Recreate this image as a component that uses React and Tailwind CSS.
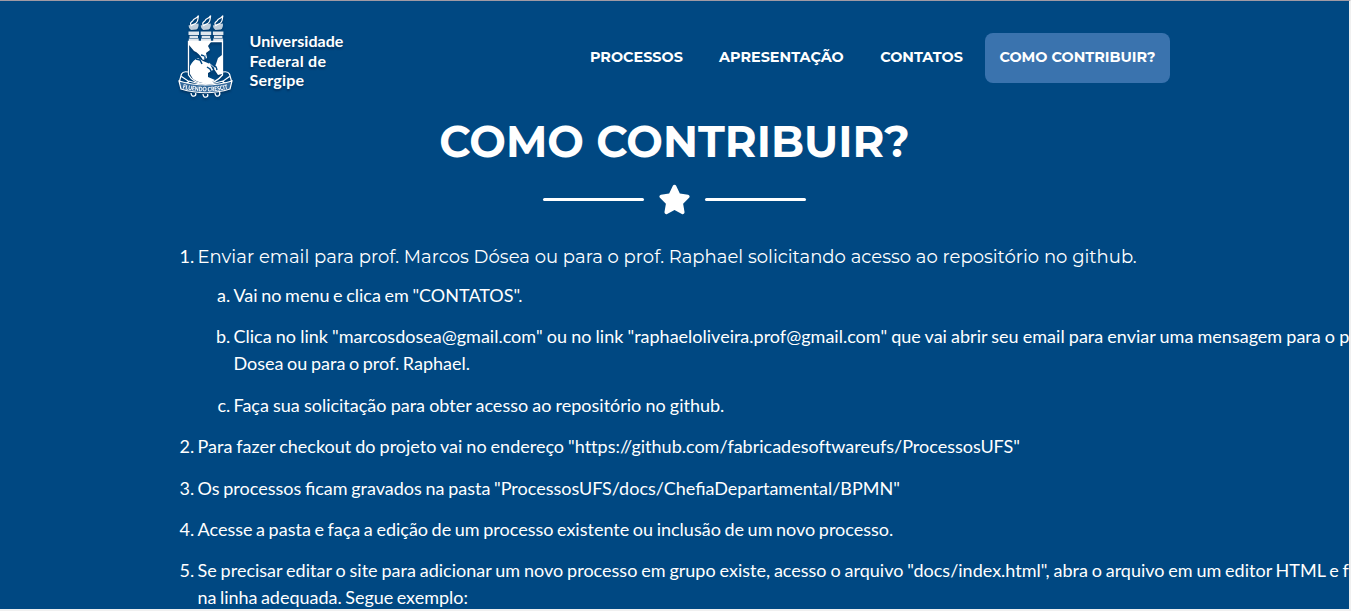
import { FaStar } from "react-icons/fa6";

function Torch({ x }) {
  return (
    <g transform={`translate(${x} 0.6)`}>
      <path d="M2.5 10C-.5 7 4 6 4.5 4C5.5 3 7.5 3 9.5 0C8.5 4 9.5 5 7.5 7C6.5 9 4 8 2.5 10Z" fill="none" stroke="white" strokeWidth="1.2" />
      <path d="M-.5 10Q4 8.5 9.5 8Q10 12 7.5 14L2 14.5Q-.5 13 -.5 10Z" fill="white" opacity=".75" />
      <path d="M-.5 16H10V19.5H-.5Z M.5 20.2H9V22.5H.5Z M-.2 23H9.7V25.5H-.2Z" fill="white" opacity=".88" />
    </g>
  );
}

function Crest() {
  return (
    <svg width="56" height="86" viewBox="0 0 56 86" className="shrink-0 drop-shadow-[0_2px_1px_rgba(0,20,50,0.35)]">
      <Torch x={11} />
      <Torch x={23.2} />
      <Torch x={35.4} />
      <path d="M10.5 26.5H44.5V60Q38 68 27.5 69Q15 68 10.5 60Z" fill="none" stroke="white" strokeWidth="1.3" />
      <path d="M11 27H33L30 31L32 35L28 38L29 43L25 45Q21 38 16 36L11 30Z" fill="white" />
      <path d="M12 51Q15 45 20 43L25 46L32 49L35 55L30 58L30 62L37 65L31 69Q20 68 15 64L12 59Z" fill="white" />
      <path d="M44 40L40 43L38 49L36 54L40 60L44 59Z" fill="white" />
      <path d="M18 44L22 45L24 49M23 40L27 41L27 44M29 52L32 54L34 58M35 50L38 52L39 55" fill="none" stroke="#004882" strokeWidth="1.5" />
      <path d="M23.5 37.5L28.5 42M31 48L38 54" stroke="white" strokeWidth=".8" />
      <path d="M10 57Q5 56 3.5 59L1.5 66Q8 70 11 66.5L3.5 61.5M45 57Q50 56 51.5 59L53.5 66Q48 70 44.5 66.5L51.5 61.5M11 66Q27 72 45 66" fill="none" stroke="white" strokeWidth="1.2" />
      <path d="M1 66L3 74Q28 81.5 52 74L54 66Q28 74 1 66Z" fill="#34699b" stroke="white" strokeWidth="1.2" />
      <path id="crest-motto" d="M4.5 73.6Q28 79.2 51 73.6" fill="none" />
      <text fontFamily="Lato, sans-serif" fontSize="6.2" fontWeight="900" fill="white">
        <textPath href="#crest-motto" textLength="46" lengthAdjust="spacingAndGlyphs">FLUENDO CRESCIT</textPath>
      </text>
      <path d="M13 78Q13.5 82 16.5 81Q18.5 80 17.5 78M25 79Q25.5 83 28.5 82Q30.5 81 29.5 79M37 78Q37.5 82 40.5 81Q42.5 80 41.5 77" fill="none" stroke="white" strokeWidth="1.3" />
    </svg>
  );
}

const links = [
  { label: "PROCESSOS", style: "w-[122px]" },
  { label: "APRESENTAÇÃO", style: "w-[153.5px]" },
  { label: "CONTATOS", style: "w-[112.5px]" },
  { label: "COMO CONTRIBUIR?", style: "w-[185px] bg-[#3a73ae] rounded-lg" },
];

function Item({ marker, sub, children }) {
  return (
    <li className={sub ? "mb-[14.4px] ml-9 flex" : "mb-[14.4px] flex"}>
      <span className="-ml-9 w-9 shrink-0 pr-[3.2px] text-right">{marker}</span>
      <div className="whitespace-nowrap">{children}</div>
    </li>
  );
}

export default function App() {
  return (
    <div className="h-[611px] w-[1351px] overflow-hidden border-r-2 border-b-2 border-t border-t-[#a09aa4] border-r-[#f0f0f0] border-b-[#f0f0f0] bg-[#004882] text-white">
      <header className="flex h-[112px] pl-[178px]">
        <div className="flex pt-[14px]">
          <Crest />
          <p className="ml-[15.5px] mt-[16px] font-['Lato'] text-[16px] leading-[19.5px] font-bold tracking-[0.05px] [text-shadow:0_2px_2px_rgba(0,20,50,0.45)]">
            Universidade<br /><span className="tracking-[0.28px]">Federal de</span><br /><span className="tracking-[0.2px]">Sergipe</span>
          </p>
        </div>
        <nav className="ml-auto mr-[179px] mt-[32px] flex h-[50px] gap-[7.2px]">
          {links.map((l) => (
            <a key={l.label} className={`flex items-center justify-center whitespace-nowrap font-[Montserrat,Inter,sans-serif] text-[14.4px] font-bold ${l.style}`}>
              {l.label}
            </a>
          ))}
        </nav>
      </header>
      <main>
        <h1 className="h-[58px] text-center font-[Montserrat,Inter,sans-serif] text-[43.4px] leading-[58px] font-bold">COMO CONTRIBUIR?</h1>
        <div className="mt-[10px] flex h-[36px] items-center justify-center gap-[14px]">
          <span className="h-[3px] w-[101px] rounded-full bg-white" />
          <FaStar className="h-[33px] w-[33px]" />
          <span className="h-[3px] w-[101px] rounded-full bg-white" />
        </div>
        <ol className="mt-[26px] ml-[197.5px] font-['Lato'] text-[18px] leading-[27px]">
          <li className="mb-[12px] flex">
            <span className="-ml-9 w-9 shrink-0 pr-[3.2px] text-right">1.</span>
            <span className="mt-px -mb-px font-[Montserrat,Inter,sans-serif] tracking-[0.028px] whitespace-nowrap">Enviar email para prof. Marcos Dósea ou para o prof. Raphael solicitando acesso ao repositório no github.</span>
          </li>
          <Item sub marker="a."><span className="[word-spacing:-1px]">Vai no menu e clica em "CONTATOS".</span></Item>
          <Item sub marker="b.">
            <span className="[word-spacing:-0.45px]">Clica no link "marcosdosea@gmail.com" ou no link "raphaeloliveira.prof@gmail.com" que vai abrir seu email para enviar uma mensagem para o prof.</span><br />
            <span className="[word-spacing:-1px]">Dosea ou para o prof. Raphael.</span>
          </Item>
          <Item sub marker="c."><span className="[word-spacing:-0.5px]">Faça sua solicitação para obter acesso ao repositório no github.</span></Item>
          <Item marker="2."><span className="[font-variant-ligatures:none] [word-spacing:-0.6px]">Para fazer checkout do projeto vai no endereço "https://github.com/fabricadesoftwareufs/ProcessosUFS"</span></Item>
          <Item marker="3."><span className="[word-spacing:-0.95px]">Os processos ficam gravados na pasta "ProcessosUFS/docs/ChefiaDepartamental/BPMN"</span></Item>
          <Item marker="4."><span className="[word-spacing:-1.02px]">Acesse a pasta e faça a edição de um processo existente ou inclusão de um novo processo.</span></Item>
          <Item marker="5.">
            <span className="[word-spacing:-0.72px]">Se precisar editar o site para adicionar um novo processo em grupo existe, acesso o arquivo "docs/index.html",</span>
            <span className="[word-spacing:-0.8px]"> abra o arquivo em um editor HTML e faça</span><br />
            <span className="[word-spacing:-1.2px]">na linha adequada. Segue exemplo:</span>
          </Item>
        </ol>
      </main>
    </div>
  );
}
